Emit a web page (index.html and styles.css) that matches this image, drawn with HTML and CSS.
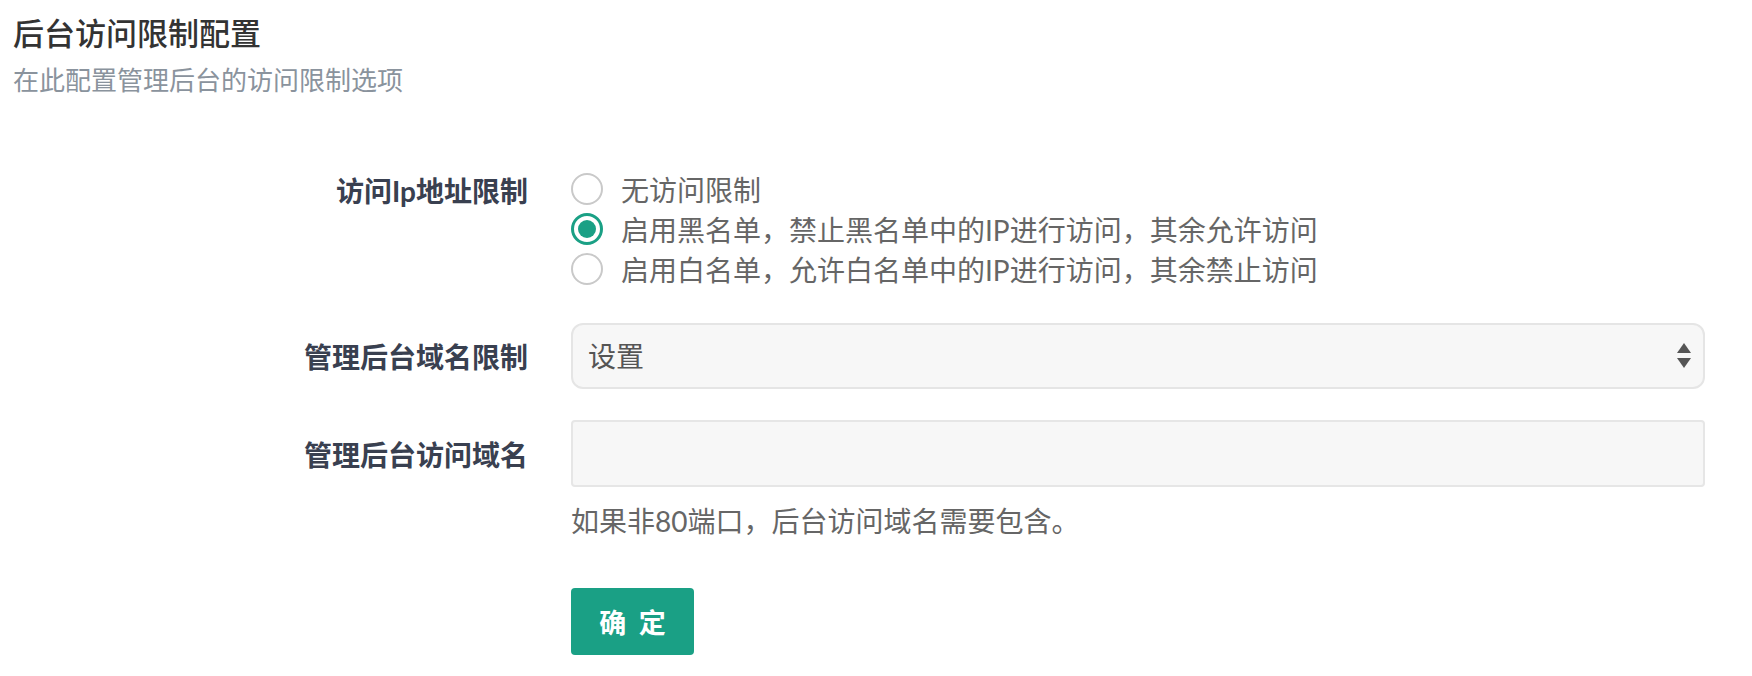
FILE: index.html
```html
<!DOCTYPE html>
<html lang="zh-CN">
<head>
<meta charset="utf-8">
<title>后台访问限制配置</title>
<link rel="stylesheet" href="styles.css">
</head>
<body>
<div class="page">
  <header class="head">
    <h1 class="title">后台访问限制配置</h1>
    <p class="subtitle">在此配置管理后台的访问限制选项</p>
  </header>
  <form class="form">
    <div class="row row-radio">
      <label class="label">访问Ip地址限制</label>
      <div class="control radios">
        <label class="radio"><span class="dot"></span><span>无访问限制</span></label>
        <label class="radio"><span class="dot checked"></span><span>启用黑名单，禁止黑名单中的IP进行访问，其余允许访问</span></label>
        <label class="radio"><span class="dot"></span><span>启用白名单，允许白名单中的IP进行访问，其余禁止访问</span></label>
      </div>
    </div>
    <div class="row row-select">
      <label class="label">管理后台域名限制</label>
      <div class="control select-wrap">
        <select class="select"><option>设置</option></select>
        <svg class="arrows" width="14" height="26" viewBox="0 0 14 26"><path d="M7 0 L14 10 L0 10 Z" fill="#555"/><path d="M0 15 L14 15 L7 25 Z" fill="#555"/></svg>
      </div>
    </div>
    <div class="row row-input">
      <label class="label">管理后台访问域名</label>
      <div class="control">
        <input class="input" type="text">
      </div>
    </div>
    <div class="row row-help">
      <span></span>
      <div class="control help">如果非80端口，后台访问域名需要包含。</div>
    </div>
    <div class="row row-btn">
      <span></span>
      <div class="control"><button type="button" class="btn">确 定</button></div>
    </div>
  </form>
</div>
</body>
</html>
```

FILE: styles.css
```css
html, body {
  margin: 0;
  padding: 0;
  background: #ffffff;
}
body {
  font-family: Lato, "Noto Sans CJK SC", sans-serif;
  color: #666666;
}
.page {
  width: 1752px;
}
.head {
  padding: 13px 0 0 13px;
}
.title {
  margin: 0;
  font-size: 31px;
  line-height: 40px;
  font-weight: 500;
  color: #333333;
}
.subtitle {
  margin: 7px 0 0 0;
  font-size: 26px;
  line-height: 40px;
  color: #8a939d;
}
.form {
  margin-top: 69px;
}
.row {
  display: grid;
  grid-template-columns: 528px 1134px;
  column-gap: 43px;
  align-items: center;
}
.label {
  text-align: right;
  font-size: 28px;
  font-weight: 700;
  color: #394050;
}
.row-radio {
  align-items: start;
}
.row-radio .label {
  line-height: 40px;
  padding-top: 2px;
}
.radios {
  display: flex;
  flex-direction: column;
}
.radio {
  display: flex;
  align-items: center;
  height: 40px;
  font-size: 28px;
  color: #666666;
}
.dot {
  box-sizing: border-box;
  width: 32px;
  height: 32px;
  border-radius: 50%;
  border: 2px solid #c9c9c9;
  background: #fff;
  margin-right: 18px;
  display: flex;
  align-items: center;
  justify-content: center;
  flex: none;
}
.dot.checked {
  border: 3px solid #1aa085;
}
.dot.checked::after {
  content: "";
  width: 18px;
  height: 18px;
  border-radius: 50%;
  background: #1aa085;
}
.row-select {
  margin-top: 34px;
}
.select-wrap {
  position: relative;
}
.select {
  -webkit-appearance: none;
  appearance: none;
  box-sizing: border-box;
  width: 100%;
  height: 66px;
  border: 2px solid #e5e5e5;
  border-radius: 12px;
  background: #f7f7f7;
  font-family: Lato, "Noto Sans CJK SC", sans-serif;
  font-size: 28px;
  color: #555555;
  padding: 0 15px;
  outline: none;
}
.arrows {
  position: absolute;
  right: 14px;
  top: 20px;
}
.row-input {
  margin-top: 31px;
}
.input {
  display: block;
  box-sizing: border-box;
  width: 100%;
  height: 67px;
  border: 2px solid #e6e6e6;
  border-radius: 4px;
  background: #f7f7f7;
  outline: none;
}
.row-help {
  margin-top: 14px;
}
.help {
  font-size: 28px;
  line-height: 40px;
  color: #666666;
}
.row-btn {
  margin-top: 47px;
}
.btn {
  width: 123px;
  height: 67px;
  border: none;
  border-radius: 4px;
  background: #1aa085;
  color: #ffffff;
  font-family: Lato, "Noto Sans CJK SC", sans-serif;
  font-size: 27px;
  font-weight: 700;
  letter-spacing: 3px;
  padding: 0 0 0 3px;
}
```
